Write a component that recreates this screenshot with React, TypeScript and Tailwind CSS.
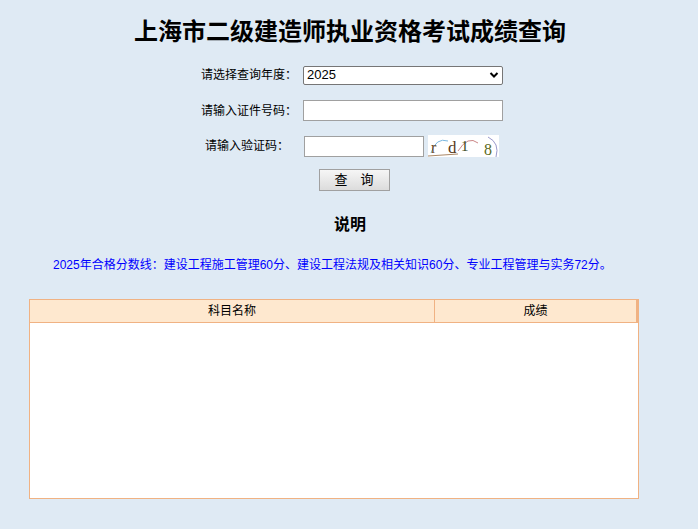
export default function App() {
  const f = { fontFamily: '"Liberation Sans","Noto Sans CJK SC",sans-serif' };
  return (
    <div className="w-[698px] h-[529px] bg-[#dfeaf4] relative overflow-hidden text-[12px] text-black" style={f}>
      <div className="pt-[13px] text-center text-[24px] font-bold leading-[34px] pl-[2px]" style={{ fontFamily: '"Noto Sans CJK SC",serif' }}>上海市二级建造师执业资格考试成绩查询</div>
      <div className="mt-[18px] flex flex-col">
        <div className="flex items-center h-[20px]">
          <div className="w-[300px] text-right pr-[3px]">请选择查询年度：</div>
          <div className="ml-[3px] w-[200px] h-[19px] border border-[#767676] bg-white rounded-[2px] flex items-center justify-between px-[3px] text-[13px]">
            <span>2025</span>
            <svg width="10" height="8" viewBox="0 0 10 8"><path d="M1.5 2l3.5 3.5L8.5 2" stroke="#000" strokeWidth="2" fill="none"/></svg>
          </div>
        </div>
        <div className="flex items-center h-[21px] mt-[15px]">
          <div className="w-[300px] text-right pr-[3px]">请输入证件号码：</div>
          <div className="ml-[3px] w-[200px] h-[21px] border border-[#a0a0a0] bg-white"></div>
        </div>
        <div className="flex items-center h-[22px] mt-[14px]">
          <div className="w-[300px] text-right pr-[11px]">请输入验证码：</div>
          <div className="ml-[4px] w-[120px] h-[21px] border border-[#a0a0a0] bg-white"></div>
          <div className="ml-[4px] w-[71px] h-[22px] bg-white relative overflow-hidden">
            <svg width="71" height="22" className="absolute inset-0"><path d="M3 18 Q8 2 20 6" stroke="#7ab8e0" fill="none"/><path d="M30 16 Q40 0 50 8" stroke="#c88" fill="none"/><path d="M60 2 Q72 8 68 22" stroke="#99c" fill="none"/><path d="M0 21 L30 19" stroke="#a86" fill="none"/></svg>
            <span className="absolute left-[3px] top-[1px] text-[16px] text-[#6b4a2a]" style={{ fontFamily: '"Liberation Serif",serif' }}>r</span>
            <span className="absolute left-[20px] top-[0px] text-[17px] text-[#5a3a1a]" style={{ fontFamily: '"Liberation Serif",serif' }}>d</span>
            <span className="absolute left-[33px] top-[0px] text-[15px] text-[#3a4a1a]" style={{ fontFamily: '"Liberation Serif",serif' }}>1</span>
            <span className="absolute left-[56px] top-[3px] text-[16px] text-[#5a6a1a]" style={{ fontFamily: '"Liberation Serif",serif' }}>8</span>
          </div>
        </div>
        <div className="flex justify-center mt-[12px] pl-[10px]">
          <div className="w-[71px] h-[22px] border border-[#a0a0a0] bg-gradient-to-b from-[#f6f6f6] to-[#dcdcdc] flex items-center justify-center text-[13px] tracking-[1em] pl-[1em]">查询</div>
        </div>
      </div>
      <div className="mt-[20px] text-center text-[16px] font-bold pl-[2px]" style={{ fontFamily: '"Noto Sans CJK SC",serif' }}>说明</div>
      <div className="mt-[21px] pl-[53px] text-[12px] text-[#0000ff]">2025年合格分数线：建设工程施工管理60分、建设工程法规及相关知识60分、专业工程管理与实务72分。</div>
      <div className="absolute left-[29px] top-[299px] w-[610px] h-[200px] border border-[#f0b283] bg-white">
        <div className="flex h-[23px] bg-[#fee8cf] border-b border-[#f0b283] text-[12px]">
          <div className="w-[405px] border-r border-[#f0b283] flex items-center justify-center">科目名称</div>
          <div className="flex-1 flex items-center justify-center border-r-2 border-[#f0b283]">成绩</div>
        </div>
      </div>
    </div>
  );
}
